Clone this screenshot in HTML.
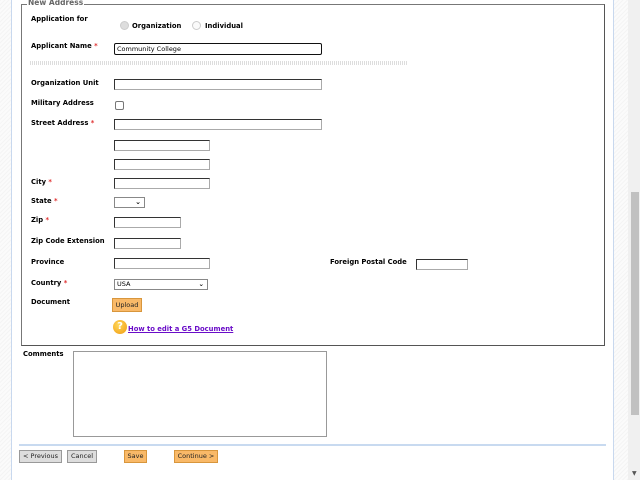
<!DOCTYPE html>
<html><head><style>
*{margin:0;padding:0;box-sizing:border-box}
body{width:640px;height:480px;overflow:hidden;background:#fff;position:relative;font-family:"DejaVu Sans","Liberation Sans",sans-serif;font-size:8px;color:#000}
.a{position:absolute}
.hatch{background:repeating-linear-gradient(135deg,#f4f4f4 0 1px,#fbfbfb 1px 3px)}
.l{position:absolute;left:31px;font-weight:bold;font-size:6.8px;white-space:nowrap}
.b{font-weight:bold;font-size:6.8px;white-space:nowrap}
.r{color:#e03030}
.in{position:absolute;border:1px solid #555;border-top-color:#333;border-left-color:#333;border-right-color:#aaa;border-bottom-color:#aaa;background:#fff;height:11px}
.btn{position:absolute;height:13px;font-size:6.5px;line-height:11px;text-align:center;border:1px solid #999;background:#ddd;color:#222}
.or{background:#f9b968;border-color:#d8963c}
</style></head><body>
<div class="a hatch" style="left:0;top:0;width:11px;height:480px"></div>
<div class="a" style="left:11px;top:0;width:1px;height:480px;background:#c8d8ee"></div>
<div class="a" style="left:613px;top:0;width:1px;height:480px;background:#c8d8ee"></div>
<div class="a hatch" style="left:614px;top:0;width:14px;height:480px"></div>
<div class="a" style="left:628px;top:0;width:12px;height:480px;background:#f0f0f0"></div>
<div class="a" style="left:631px;top:192px;width:8px;height:223px;background:#c1c1c1"></div>
<div class="a" style="left:632px;top:470px;font-size:6px;color:#555">▼</div>

<div class="a" style="left:21px;top:4px;width:584px;height:342px;border:1px solid #777;border-right-color:#555;border-bottom-color:#555"></div>
<div class="a b" style="left:27px;top:-2px;background:#fff;padding:0 1px;font-size:7.5px;color:#666">New Address</div>

<div class="l" style="top:15px">Application for</div>
<div class="a" style="left:120px;top:21px;width:9px;height:9px;border-radius:50%;border:1px solid #ccc;background:#ddd"></div>
<div class="a b" style="left:132px;top:22px">Organization</div>
<div class="a" style="left:192px;top:21px;width:9px;height:9px;border-radius:50%;border:1px solid #ccc;background:#fafafa"></div>
<div class="a b" style="left:205px;top:22px">Individual</div>

<div class="l" style="top:42px">Applicant Name <span class="r">*</span></div>
<div class="in" style="left:114px;top:43px;width:208px;height:12px;border:1px solid #111;border-radius:2px;font-size:6.5px;line-height:10px;padding-left:2px">Community College</div>
<div class="a" style="left:30px;top:61px;width:378px;height:4px;background:repeating-linear-gradient(90deg,#ddd 0 1px,#fff 1px 2px)"></div>

<div class="l" style="top:79px">Organization Unit</div>
<div class="in" style="left:114px;top:79px;width:208px"></div>
<div class="l" style="top:99px">Military Address</div>
<div class="a" style="left:115px;top:101px;width:9px;height:9px;border:1px solid #777;border-radius:2px"></div>
<div class="l" style="top:119px">Street Address <span class="r">*</span></div>
<div class="in" style="left:114px;top:119px;width:208px"></div>
<div class="in" style="left:114px;top:140px;width:96px"></div>
<div class="in" style="left:114px;top:159px;width:96px"></div>
<div class="l" style="top:178px">City <span class="r">*</span></div>
<div class="in" style="left:114px;top:178px;width:96px"></div>
<div class="l" style="top:197px">State <span class="r">*</span></div>
<div class="a" style="left:114px;top:197px;width:31px;height:11px;border:1px solid #888;font-size:7px;text-align:right;padding-right:3px;line-height:9px;font-weight:bold">⌄</div>
<div class="l" style="top:216px">Zip <span class="r">*</span></div>
<div class="in" style="left:114px;top:217px;width:67px"></div>
<div class="l" style="top:237px">Zip Code Extension</div>
<div class="in" style="left:114px;top:238px;width:67px"></div>
<div class="l" style="top:258px">Province</div>
<div class="in" style="left:114px;top:258px;width:96px"></div>
<div class="a b" style="left:330px;top:258px">Foreign Postal Code</div>
<div class="in" style="left:416px;top:259px;width:52px"></div>
<div class="l" style="top:279px">Country <span class="r">*</span></div>
<div class="a" style="left:114px;top:279px;width:94px;height:11px;border:1px solid #888;font-size:6.5px;line-height:9px;padding-left:2px">USA<span style="position:absolute;right:3px;font-weight:bold">⌄</span></div>
<div class="l" style="top:298px">Document</div>
<div class="btn or" style="left:112px;top:298px;width:30px;height:14px;line-height:12px">Upload</div>
<div class="a" style="left:113px;top:320px;width:14px;height:14px;border-radius:50%;background:radial-gradient(circle at 40% 35%,#ffd85a,#f09a10);color:#fff;font-weight:bold;font-size:10px;line-height:14px;text-align:center">?</div>
<div class="a b" style="left:128px;top:325px;color:#6a0dc8;text-decoration:underline">How to edit a G5 Document</div>

<div class="a b" style="left:23px;top:350px">Comments</div>
<div class="a" style="left:73px;top:351px;width:254px;height:86px;border:1px solid #999"></div>
<div class="a" style="left:19px;top:444px;width:587px;height:2px;background:#c8daf0"></div>
<div class="btn" style="left:19px;top:450px;width:43px">&lt; Previous</div>
<div class="btn" style="left:67px;top:450px;width:30px">Cancel</div>
<div class="btn or" style="left:124px;top:450px;width:23px">Save</div>
<div class="btn or" style="left:174px;top:450px;width:44px">Continue &gt;</div>
</body></html>
